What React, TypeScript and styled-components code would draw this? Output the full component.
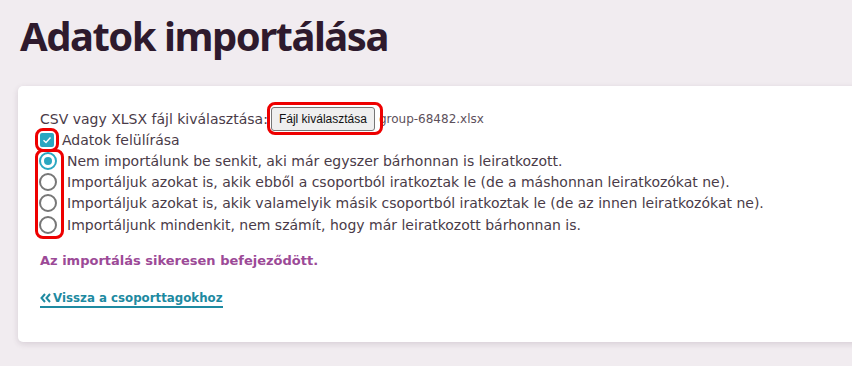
import React from "react";
import styled, { createGlobalStyle } from "styled-components";

const Global = createGlobalStyle`
  html, body { margin: 0; padding: 0; }
  body {
    background: #f1ecf0;
    font-family: "DejaVu Sans", "Noto Sans", sans-serif;
    overflow: hidden;
    width: 852px;
    height: 366px;
  }
`;

const Page = styled.div`
  padding: 10px 0 0 18px;
  display: flex;
  flex-direction: column;
`;

const Title = styled.h1`
  margin: 0 0 0 2px;
  font-family: "Noto Sans", sans-serif;
  font-weight: 700;
  font-size: 40px;
  line-height: 52px;
  color: #2e1a2d;
  letter-spacing: -1.5px;
`;

const Card = styled.section`
  margin-top: 24px;
  margin-right: -30px;
  background: #fff;
  border-radius: 5px;
  box-shadow: 0 2px 6px rgba(60, 30, 60, 0.14);
  padding: 20px 22px 34px 22px;
  display: flex;
  flex-direction: column;
  color: #4a3b48;
  font-size: 14px;
`;

const FileRow = styled.div`
  display: flex;
  align-items: center;
  height: 26px;
  white-space: nowrap;
`;

const Annotated = styled.span<{ $inset: string }>`
  position: relative;
  display: inline-flex;
  &::after {
    content: "";
    position: absolute;
    inset: ${(p) => p.$inset};
    border: 3px solid #ee0000;
    border-radius: 8px;
    pointer-events: none;
  }
`;

const FileButton = styled.button`
  font-family: "Liberation Sans", Arial, sans-serif;
  font-size: 12px;
  color: #111;
  background: #efefef;
  border: 1px solid #767676;
  border-radius: 3px;
  padding: 3px 7px;
  height: 24px;
  margin: 0 4px 0 3px;
`;

const FileName = styled.span`
  font-size: 12px;
  color: #5d505b;
`;

const CheckRow = styled.label`
  display: flex;
  align-items: center;
  height: 19px;
  margin-top: -2px;
  gap: 8px;
`;

const CheckBox = styled.span`
  width: 14px;
  height: 14px;
  border-radius: 2px;
  background: #2aa7c1;
  display: flex;
  align-items: center;
  justify-content: center;
`;

const RadioGroup = styled.div`
  position: relative;
  margin-top: 1px;
  display: flex;
  flex-direction: column;
  &::after {
    content: "";
    position: absolute;
    left: -5px;
    top: -1px;
    width: 23px;
    bottom: -3px;
    border: 3px solid #ee0000;
    border-radius: 8px;
    pointer-events: none;
  }
`;

const RadioRow = styled.label`
  display: flex;
  align-items: center;
  height: 21.4px;
  gap: 10px;
  white-space: nowrap;
`;

const Radio = styled.span<{ $on?: boolean }>`
  width: 14px;
  height: 14px;
  border-radius: 50%;
  border: 2px solid ${(p) => (p.$on ? "#2aa7c1" : "#777")};
  display: flex;
  align-items: center;
  justify-content: center;
  margin-left: -1px;
  &::before {
    content: "";
    width: 8px;
    height: 8px;
    border-radius: 50%;
    background: ${(p) => (p.$on ? "#2aa7c1" : "transparent")};
  }
`;

const Success = styled.p`
  margin: 17px 0 0 0;
  font-weight: 700;
  font-size: 13px;
  color: #9c4a97;
`;

const BackLink = styled.a`
  margin-top: 22px;
  align-self: flex-start;
  font-weight: 700;
  font-size: 11.8px;
  color: #1e8aa1;
  text-decoration: none;
  border-bottom: 2px solid #1e8aa1;
  line-height: 16px;
  display: inline-flex;
  align-items: center;
  gap: 1px;
`;

const options = [
  "Nem importálunk be senkit, aki már egyszer bárhonnan is leiratkozott.",
  "Importáljuk azokat is, akik ebből a csoportból iratkoztak le (de a máshonnan leiratkozókat ne).",
  "Importáljuk azokat is, akik valamelyik másik csoportból iratkoztak le (de az innen leiratkozókat ne).",
  "Importáljunk mindenkit, nem számít, hogy már leiratkozott bárhonnan is.",
];

export default function App() {
  return (
    <>
      <Global />
      <Page>
        <Title>Adatok importálása</Title>
        <Card>
          <FileRow>
            CSV vagy XLSX fájl kiválasztása:
            <Annotated $inset="-5px -4px -4px -1px">
              <FileButton type="button">Fájl kiválasztása</FileButton>
            </Annotated>
            <FileName>group-68482.xlsx</FileName>
          </FileRow>
          <CheckRow>
            <Annotated $inset="-5px -5px -5px -5px">
              <CheckBox>
                <svg width="10" height="10" viewBox="0 0 10 10">
                  <path d="M1.5 5.2 L4 7.5 L8.5 2.5" fill="none" stroke="#fff" strokeWidth="1.4" />
                </svg>
              </CheckBox>
            </Annotated>
            Adatok felülírása
          </CheckRow>
          <RadioGroup>
            {options.map((o, i) => (
              <RadioRow key={i}>
                <Radio $on={i === 0} />
                {o}
              </RadioRow>
            ))}
          </RadioGroup>
          <Success>Az importálás sikeresen befejeződött.</Success>
          <BackLink href="#">
            <svg width="12" height="10" viewBox="0 0 12 10">
              <path d="M5 1 L1.5 5 L5 9 M10 1 L6.5 5 L10 9" fill="none" stroke="#1e8aa1" strokeWidth="2" />
            </svg>
            Vissza a csoporttagokhoz
          </BackLink>
        </Card>
      </Page>
    </>
  );
}
